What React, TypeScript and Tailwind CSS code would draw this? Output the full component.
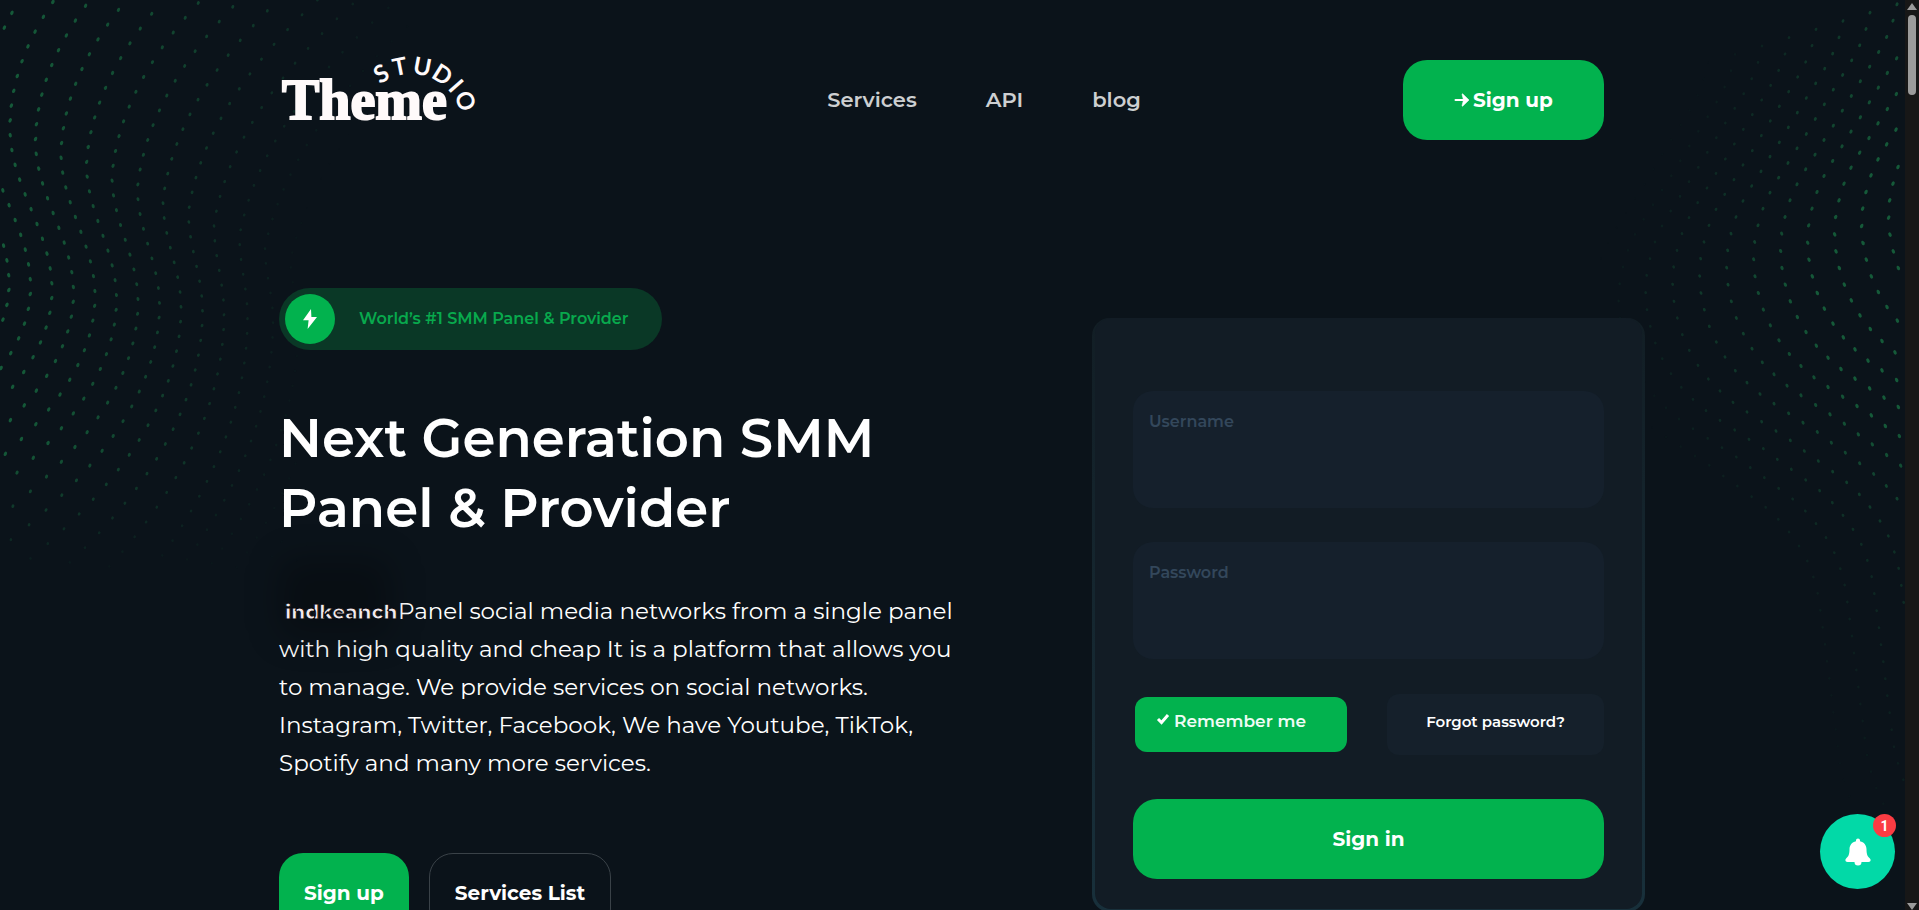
import React from "react";

type Point = [number, number];

const ARM_UP: Point[] = [
  [0, 0], [3, -52], [13, -102], [28, -152], [49, -200], [75, -245], [103, -289], [130, -333], [158, -376],
  [185, -421], [212, -465], [239, -509], [267, -553], [294, -597], [318, -642], [337, -691], [349, -740],
];
const ARM_DOWN: Point[] = [
  [4, 51], [14, 101], [29, 151], [50, 198], [76, 243], [107, 284], [142, 320], [181, 354], [223, 383],
  [267, 412], [310, 440], [353, 468], [395, 500], [437, 530], [480, 562], [522, 594], [560, 630], [592, 668],
  [622, 710], [647, 755], [665, 803], [678, 852], [686, 903], [693, 954], [700, 1005], [706, 1056], [713, 1107],
  [719, 1158], [725, 1209], [732, 1260], [738, 1311], [745, 1362], [757, 1412], [773, 1461], [794, 1508],
];

interface Dot {
  x: number;
  y: number;
  o: number;
  a: number;
}

function rightDots(): Dot[] {
  const dots: Dot[] = [];
  for (let c = -5; c < 12; c++) {
    [...ARM_UP, ...ARM_DOWN].forEach(([dx, dy]) => {
      const x = (866 - 81 * c + dx) / 3;
      const y = (653 + 25 * c + dy) / 3;
      if (x > 304 || x < 0 || y < 0) return;
      const edge = y < 290 ? (290 - y) * 0.55 : (y - 290) * 0.5;
      const fade = Math.min(1, Math.max(0, (x - edge + 20) / 230));
      const low = y > 420 ? Math.max(0.45, 1 - (y - 420) / 260) : 1;
      dots.push({ x, y, o: fade * low, a: y < 230 ? 25 : -25 });
    });
  }
  return dots;
}

function leftDots(): Dot[] {
  const dots: Dot[] = [];
  for (let k = -3; k < 15; k++) {
    const x0 = 10 + 25.5 * k;
    const ym = 128 + 12 * k;
    const amp = Math.max(8, 42 - 4 * k);
    const yp = 290 + 3 * k;
    for (let y = -10 + ((k + 3) * 4) % 15; y < 570; y += 14.8) {
      let x: number;
      if (y < ym) x = x0 + (ym - y) ** 2 * Math.max(0.0016, 0.0027 - 0.00007 * k) + (ym - y) * 0.02 * k;
      else if (y < yp) x = x0 + (amp * (1 - Math.cos((Math.PI * (y - ym)) / (yp - ym)))) / 2;
      else x = x0 + amp - (y - yp) ** 2 * Math.max(0.0015, 0.0042 - 0.0003 * k);
      if (x < 0 || y < 0) continue;
      const reach = 310 + Math.max(0, 200 - y) * 0.6;
      const fade = Math.max(0, 1 - (x / reach) ** 1.4);
      const low = Math.min(1, Math.max(0, (580 - y) / 130));
      dots.push({ x, y, o: fade * low, a: y < ym ? 25 : y < yp ? -15 : 25 });
    }
  }
  return dots;
}

function DotField({ dots, className }: { dots: Dot[]; className: string }) {
  return (
    <svg aria-hidden="true" className={className}>
      {dots.map((d, i) => (
        <ellipse
          key={i}
          cx={d.x}
          cy={d.y}
          rx={1.2 + 0.4 * d.o}
          ry={1.2 + 1.2 * d.o}
          fill="#155a39"
          opacity={d.o}
          transform={`rotate(${d.a} ${d.x} ${d.y})`}
        />
      ))}
    </svg>
  );
}

const ARC: [string, number][] = [["S", -30], ["T", -11], ["U", 11], ["D", 32], ["I", 49], ["O", 66]];

function Logo() {
  return (
    <svg className="block overflow-visible" width="200" height="90" viewBox="279 50 200 90" role="img" aria-label="Theme Studio">
      <text x="282" y="119" fontFamily="Liberation Serif, serif" fontWeight="700" fontSize="56" fill="#fffafa" stroke="#fffafa" strokeWidth="2">
        Theme
      </text>
      {ARC.map(([ch, angle]) => (
        <text
          key={ch}
          x="411"
          y="74"
          textAnchor="middle"
          transform={`rotate(${angle} 411 125)`}
          fontFamily="Lato, sans-serif"
          fontWeight="700"
          fontSize="24"
          fill="#fffafa"
        >
          {ch}
        </text>
      ))}
    </svg>
  );
}

function Header() {
  return (
    <header className="flex h-20 items-center justify-between pr-[22px]">
      <a href="#home" className="-mt-2.5">
        <Logo />
      </a>
      <nav className="ml-[86px] flex gap-[69px] text-[21px] font-semibold text-[#cdcfd1]">
        <a href="#services">Services</a>
        <a href="#api">API</a>
        <a href="#blog">blog</a>
      </nav>
      <a href="#signup" className="flex h-20 w-[201px] items-center justify-center gap-[3px] rounded-3xl bg-[#02b24e] text-xl font-bold text-white">
        <svg width="16" height="14" viewBox="0 0 16 14" aria-hidden="true">
          <path d="M1.500 7h8" stroke="#fff" strokeWidth="2" strokeLinecap="round" />
          <path d="M8 1.200 8.600.8 15 7l-6.400 6.200-.6-.4L9.500 7Z" fill="#fff" stroke="#fff" strokeWidth=".6" />
        </svg>
        Sign up
      </a>
    </header>
  );
}

function Hero() {
  return (
    <section className="w-[720px]">
      <div className="flex h-[62px] w-[383px] items-center gap-6 rounded-full bg-[#0a3826] pl-1.5">
        <span className="flex size-[50px] items-center justify-center rounded-full bg-[#02b24e]">
          <svg width="16" height="20" viewBox="0 0 16 20" aria-hidden="true">
            <path d="M9 0 1 11.2h5.6L5.6 20 15 8H9.400Z" fill="#fff" />
          </svg>
        </span>
        <span className="text-base font-semibold text-[#08a94d]">World’s #1 SMM Panel &amp; Provider</span>
      </div>
      <h1 className="mt-[53px] text-[53px] leading-[70px] font-semibold text-white">
        Next Generation SMM
        <br />
        Panel &amp; Provider
      </h1>
      <p className="mt-[49px] text-[23px] leading-[38px] whitespace-nowrap text-white">
        <span className="relative inline-block w-[119px] pl-1.5 text-xl font-extrabold text-[#f3eaed]">
          <span className="absolute -top-10 left-0 h-20 w-28 rounded-2xl bg-black/25 blur-lg" />
          <span className="relative [-webkit-text-stroke:1px_#0a0a0f]">indkeanch</span>
        </span>
        Panel social media networks from a single panel
        <br />
        with high quality and cheap It is a platform that allows you
        <br />
        to manage. We provide services on social networks.
        <br />
        Instagram, Twitter, Facebook, We have Youtube, TikTok,
        <br />
        Spotify and many more services.
      </p>
      <div className="mt-[71px] flex gap-5 text-xl font-bold text-white">
        <a href="#signup" className="flex h-20 w-[130px] items-center justify-center rounded-3xl bg-[#02b24e]">
          Sign up
        </a>
        <a href="#services" className="flex h-20 w-[182px] items-center justify-center rounded-3xl border border-[#3a4248]">
          Services List
        </a>
      </div>
    </section>
  );
}

const FIELD =
  "block h-[117px] w-full rounded-[20px] bg-[#15202c] px-4 pt-4 pb-[73px] text-base font-semibold text-white outline-none placeholder:text-[#33475b] placeholder:opacity-100";

function SignIn() {
  return (
    <div className="mt-[30px] -mr-[19px] w-[553px] rounded-[18px] bg-linear-to-b from-[#121e25] to-[#18303b] px-[3px] pb-[3px]">
      <form className="rounded-[16px] bg-[#121c25] px-[38px] pt-[73px] pb-[30px]">
        <input aria-label="Username" placeholder="Username" className={FIELD} />
        <input aria-label="Password" type="password" placeholder="Password" className={`mt-[34px] ${FIELD}`} />
        <div className="mt-[35px] flex items-center justify-between">
          <label className="ml-0.5 flex h-[55px] w-[212px] gap-1 rounded-xl bg-[#02b24e] pt-2.5 pl-[21px] text-[17px] leading-7 font-semibold text-[#effcf5]">
            <input type="checkbox" defaultChecked className="sr-only" />
            <svg className="mt-1.5" width="14" height="12" viewBox="0 0 14 12" aria-hidden="true">
              <path d="m2 6 3.500 3.500L12 2" fill="none" stroke="#fff" strokeWidth="3" />
            </svg>
            Remember me
          </label>
          <a href="#forgot" className="flex h-[61px] w-[217px] items-center justify-center rounded-xl bg-[#15202b] pb-1 text-[15px] font-semibold text-white">
            Forgot password?
          </a>
        </div>
        <button type="submit" className="mt-11 h-20 w-full rounded-3xl bg-[#02b24e] text-xl font-bold text-white">
          Sign in
        </button>
      </form>
    </div>
  );
}

function NotificationButton() {
  return (
    <button aria-label="Notifications" className="absolute right-2.5 bottom-[21px] flex size-[75px] items-center justify-center rounded-full bg-[#02d9a7]">
      <svg width="26" height="28" viewBox="0 0 26 28" aria-hidden="true">
        <path
          d="M13 .5c1.200 0 2 .9 2 2v.7c4 .8 6.500 4 6.500 8 0 5 1 7.300 3.200 9 1.800 1.500.8 3.800-1.200 3.800H2.500C.5 24-.5 21.700 1.300 20.200c2.200-1.700 3.200-4 3.200-9 0-4 2.500-7.200 6.500-8v-.7c0-1.100.8-2 2-2Z"
          fill="#fff"
        />
        <path d="M9.500 24h7a3.500 3.500 0 0 1-7 0Z" fill="#fff" />
      </svg>
      <span className="absolute top-0 -right-px flex size-[23px] items-center justify-center rounded-full bg-[#fb3c43] font-[Roboto] text-sm font-bold text-white">
        1
      </span>
    </button>
  );
}

function ScrollRail() {
  return (
    <div aria-hidden="true" className="flex w-3.5 shrink-0 flex-col items-center justify-between bg-[#171717] pt-[3px]">
      <div className="flex flex-col items-center gap-[5px]">
        <svg width="10" height="7" viewBox="0 0 10 7">
          <path d="M5 0 10 7H0Z" fill="#9b9b9b" />
        </svg>
        <div className="h-20 w-2 rounded-full bg-[#9b9b9b]" />
      </div>
      <svg width="10" height="7" viewBox="0 0 10 7">
        <path d="M0 0h10L5 7Z" fill="#9b9b9b" />
      </svg>
    </div>
  );
}

export default function App() {
  return (
    <div className="flex h-screen overflow-hidden bg-[#0b131a] font-[Montserrat,Inter,sans-serif]">
      <div className="relative min-w-0 flex-1 overflow-hidden">
        <DotField dots={leftDots()} className="absolute top-0 left-0 h-[600px] w-[460px]" />
        <DotField dots={rightDots()} className="absolute top-0 right-0 h-[900px] w-[305px]" />
        <main className="relative mx-auto max-w-[1347px] pt-[60px]">
          <Header />
          <div className="mt-[148px] flex items-start justify-between">
            <Hero />
            <SignIn />
          </div>
        </main>
        <NotificationButton />
      </div>
      <ScrollRail />
    </div>
  );
}
